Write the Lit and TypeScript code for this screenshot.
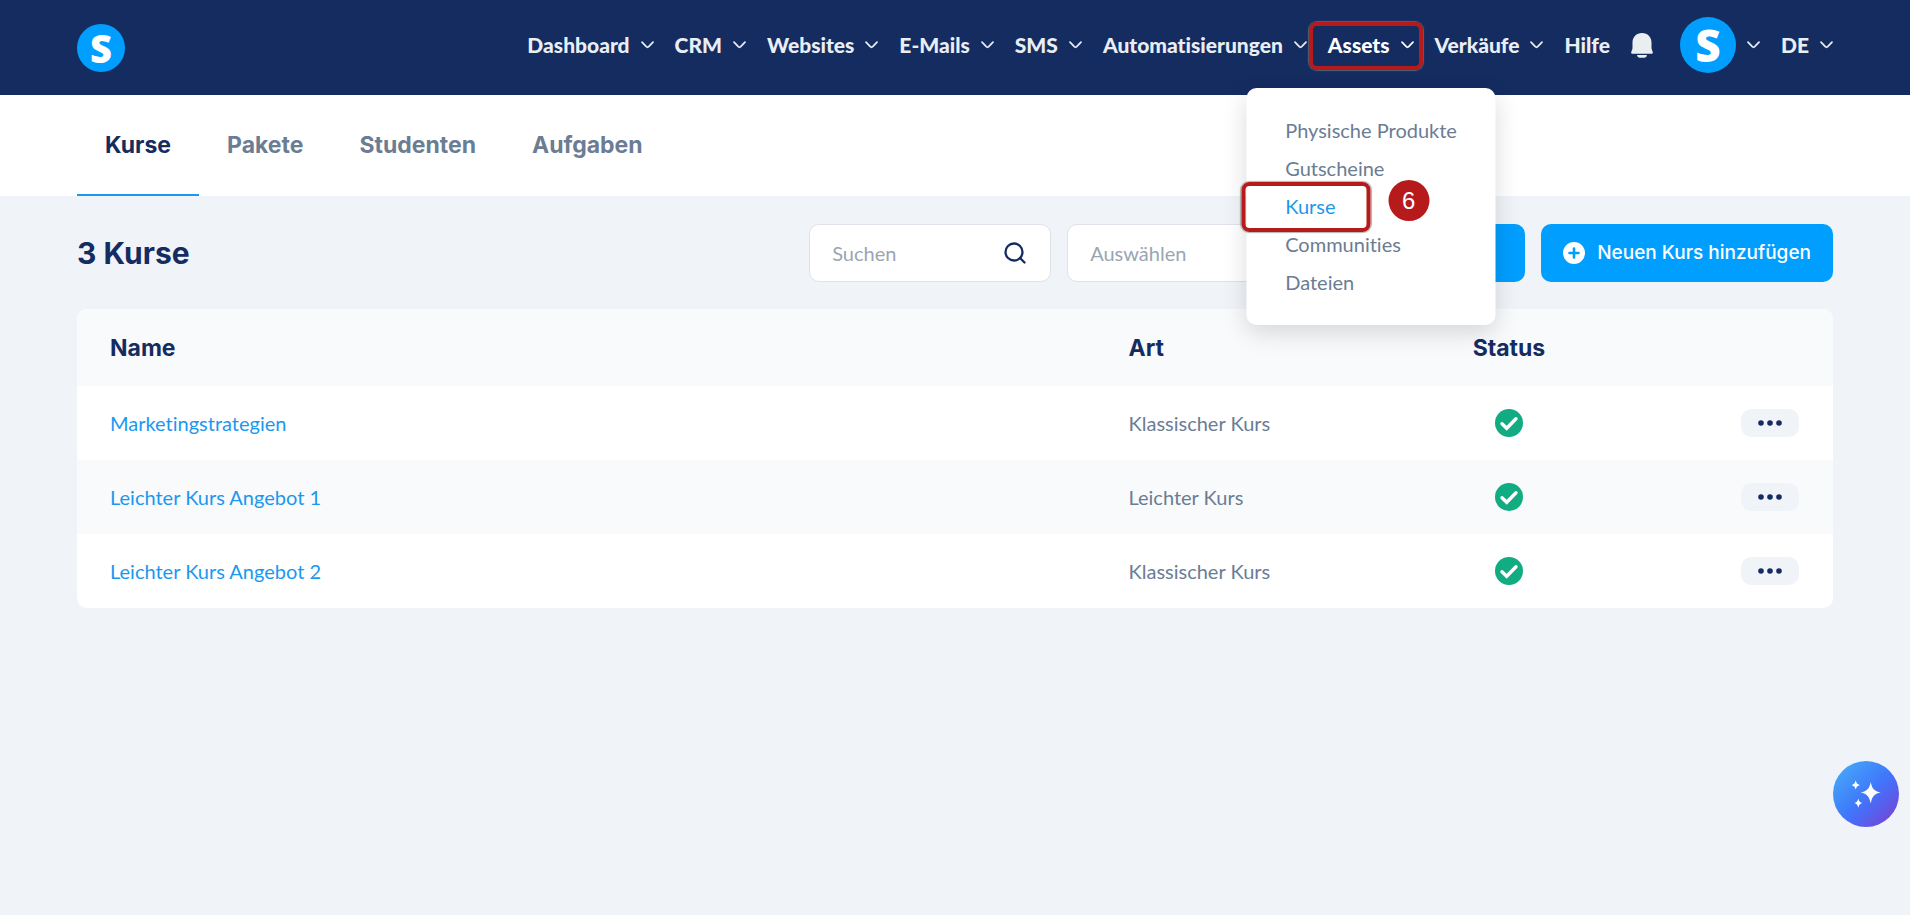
import { LitElement, html, css, svg } from "lit";
import { customElement, property, state } from "lit/decorators.js";
import { classMap } from "lit/directives/class-map.js";

interface Course {
  name: string;
  kind: string;
}

const chevron = svg`<svg class="chevron" viewBox="0 0 13 8" width="13" height="8" aria-hidden="true">
  <path d="M1 1.2 L5.3 5.7 Q6.5 6.8 7.7 5.7 L12 1.2" fill="none" stroke="currentColor" stroke-width="1.7" stroke-linecap="round"/>
</svg>`;

@customElement("brand-mark")
export class BrandMark extends LitElement {
  static styles = css`
    :host {
      display: inline-flex;
      align-items: center;
      justify-content: center;
      width: 48px;
      height: 48px;
      border-radius: 50%;
      background: #009eff;
      color: #fff;
      font: 800 38px/46px "Open Sans", sans-serif;
    }
    :host([large]) {
      width: 56px;
      height: 56px;
      font-size: 44px;
      line-height: 54px;
    }
  `;
  @property({ type: Boolean, reflect: true }) large = false;
  render() {
    return html`<span>S</span>`;
  }
}

@customElement("main-nav")
export class MainNav extends LitElement {
  static styles = css`
    :host {
      display: block;
      font: 900 21px/24px Lato, sans-serif;
      font-variant-ligatures: none;
    }
    .list {
      display: flex;
      align-items: center;
      gap: 21px;
      margin: 0;
      padding: 0;
      list-style: none;
    }
    .item {
      position: relative;
    }
    .link {
      display: flex;
      align-items: center;
      gap: 11px;
      padding: 0;
      border: 0;
      background: none;
      color: #e9eef5;
      font: inherit;
      text-decoration: none;
      white-space: nowrap;
      cursor: pointer;
    }
    .link.open {
      color: #fff;
    }
    .chevron {
      flex: none;
    }
    .bell {
      display: block;
    }
    .tools {
      margin-left: 6px;
    }
    .frame {
      position: absolute;
      box-sizing: border-box;
      border: 4px solid #b71a1b;
      border-radius: 8px;
      box-shadow: 0 0 1px 1px rgba(130, 130, 120, 0.6);
      pointer-events: none;
    }
    .frame.top {
      inset: -11px -9px -13px -19px;
    }
    .frame.entry {
      inset: -5px 125px -7px -5px;
    }
    .menu {
      position: absolute;
      top: 55px;
      left: 50%;
      width: 249px;
      box-sizing: border-box;
      transform: translateX(-50%);
      margin: 0;
      padding: 23px 0 24px;
      list-style: none;
      border-radius: 10px;
      background: #fff;
      box-shadow: 0 8px 24px rgba(0, 0, 0, 0.14);
      font-weight: 400;
      font-size: 20px;
      line-height: 38px;
    }
    .entry-row {
      position: relative;
      padding-left: 39px;
    }
    .entry-link {
      color: #6b7c93;
      text-decoration: none;
    }
    .entry-link.current {
      color: #1b98ee;
    }
    .step {
      position: absolute;
      top: -7px;
      left: 142px;
      width: 41px;
      height: 41px;
      border-radius: 50%;
      background: #b71a1b;
      color: #fff;
      font: 400 24px/41px "Liberation Sans", sans-serif;
      text-align: center;
    }
  `;

  @state() private open = "Assets";

  private sections = ["Dashboard", "CRM", "Websites", "E-Mails", "SMS", "Automatisierungen", "Assets", "Verkäufe"];
  private assets = ["Physische Produkte", "Gutscheine", "Kurse", "Communities", "Dateien"];

  private toggle(name: string) {
    this.open = this.open === name ? "" : name;
  }

  private menu() {
    return html`<ul class="menu">
      ${this.assets.map(
        (a) => html`<li class="entry-row">
          <a href="#" class=${classMap({ "entry-link": true, current: a === "Kurse" })}>${a}</a>
          ${a === "Kurse" ? html`<span class="frame entry"></span><span class="step">6</span>` : ""}
        </li>`
      )}
    </ul>`;
  }

  render() {
    return html`<nav>
      <ul class="list">
        ${this.sections.map(
          (s) => html`<li class="item">
            <button
              type="button"
              class=${classMap({ link: true, open: s === this.open })}
              aria-expanded=${s === this.open ? "true" : "false"}
              @click=${() => this.toggle(s)}
            >${s}${chevron}</button>
            ${s === "Assets" && this.open === s ? html`<span class="frame top"></span>${this.menu()}` : ""}
          </li>`
        )}
        <li><a class="link" href="#">Hilfe</a></li>
        <li>
          <button type="button" class="link" aria-label="Benachrichtigungen">
            <svg class="bell" viewBox="0 0 22 25" width="22" height="25" aria-hidden="true">
              <path fill="#e9eef0" d="M11 0C5.300 0 1.500 4.200 1.500 9.500V15.500L.2 19.200Q-.2 20.700 1.400 20.700H20.600Q22.200 20.700 21.800 19.200L20.500 15.500V9.500C20.500 4.200 16.700 0 11 0Z"/>
              <path fill="#e9eef0" d="M6 22H16Q15.600 24.700 13.500 24.700H8.500Q6.400 24.700 6 22Z"/>
            </svg>
          </button>
        </li>
        <li class="tools">
          <button type="button" class="link" aria-label="Konto"><brand-mark large></brand-mark>${chevron}</button>
        </li>
        <li><button type="button" class="link">DE${chevron}</button></li>
      </ul>
    </nav>`;
  }
}

@customElement("course-table")
export class CourseTable extends LitElement {
  static styles = css`
    :host {
      display: block;
      overflow: hidden;
      border-radius: 10px;
      background: #fff;
      font: 400 20px/24px Lato, sans-serif;
      font-variant-ligatures: none;
      color: #6b7c93;
    }
    .table {
      width: 100%;
      border-collapse: collapse;
      table-layout: fixed;
    }
    .head,
    .cell {
      box-sizing: border-box;
    }
    .name {
      width: 58%;
    }
    .kind {
      width: 19.6%;
    }
    .status {
      width: 12%;
    }
    .head {
      height: 77px;
      padding: 0 34px 0 33px;
      background: #f9fafc;
      color: #152c61;
      font: 700 23px/32px Inter, sans-serif;
      text-align: left;
    }
    .cell {
      height: 74px;
      padding: 0 34px 0 33px;
    }
    .cell.mark {
      padding-left: 55px;
    }
    .cell.actions {
      text-align: right;
    }
    .row:nth-child(even) .cell {
      background: #f9fafc;
    }
    .link {
      color: #1b98ee;
      text-decoration: none;
    }
    .check,
    .dots {
      display: block;
    }
    .more {
      display: inline-flex;
      align-items: center;
      justify-content: center;
      width: 58px;
      height: 28px;
      padding: 0;
      border: 0;
      border-radius: 10px;
      background: #f0f4f9;
      vertical-align: middle;
      cursor: pointer;
    }
  `;

  @property({ attribute: false }) courses: Course[] = [];

  render() {
    return html`<table class="table">
      <thead>
        <tr>
          <th class="head name" scope="col">Name</th>
          <th class="head kind" scope="col">Art</th>
          <th class="head status" scope="col">Status</th>
          <th class="head"></th>
        </tr>
      </thead>
      <tbody>
        ${this.courses.map(
          (c) => html`<tr class="row">
            <td class="cell"><a class="link" href="#">${c.name}</a></td>
            <td class="cell">${c.kind}</td>
            <td class="cell mark">
              <svg class="check" viewBox="0 0 28 28" width="28" height="28" role="img" aria-label="Aktiv">
                <circle cx="14" cy="14" r="14" fill="#12ac83"/>
                <path d="M7 14.800 L11.700 19.300 L21 9.800" fill="none" stroke="#fff" stroke-width="3.400" stroke-linecap="round" stroke-linejoin="miter"/>
              </svg>
            </td>
            <td class="cell actions">
              <button type="button" class="more" aria-label="Mehr">
                <svg class="dots" viewBox="0 0 24 6" width="24" height="6" aria-hidden="true" fill="#152c61">
                  <circle cx="3" cy="3" r="2.800"/><circle cx="12" cy="3" r="2.800"/><circle cx="21" cy="3" r="2.800"/>
                </svg>
              </button>
            </td>
          </tr>`
        )}
      </tbody>
    </table>`;
  }
}

@customElement("app-root")
export class AppRoot extends LitElement {
  static styles = css`
    :host {
      display: block;
      min-height: 100vh;
      background: #f0f4f9;
      color: #152c61;
      font: 400 20px/24px Lato, sans-serif;
      font-variant-ligatures: none;
    }
    .header {
      position: relative;
      z-index: 2;
      display: flex;
      align-items: center;
      justify-content: space-between;
      height: 95px;
      padding: 0 77px;
      background: #152c61;
    }
    .nav {
      margin-bottom: 5px;
    }
    .tabs {
      display: flex;
      padding: 0 77px;
      background: #fff;
    }
    .tab {
      padding: 34px 28px 33px;
      border-bottom: 2px solid transparent;
      color: #6b7c93;
      font: 700 23px/32px Inter, sans-serif;
      text-decoration: none;
    }
    .tab.active {
      border-color: #1b98ee;
      color: #152c61;
    }
    .main {
      display: flex;
      flex-direction: column;
      gap: 27px;
      padding: 28px 77px;
    }
    .toolbar {
      display: flex;
      align-items: center;
      gap: 16px;
    }
    .title {
      margin: 0 auto 0 0;
      font: 700 30px/40px Inter, sans-serif;
    }
    .field {
      box-sizing: border-box;
      display: flex;
      align-items: center;
      width: 242px;
      height: 58px;
      padding: 0 24px 0 22px;
      border: 1px solid #dfe2e8;
      border-radius: 10px;
      background: #fff;
    }
    .control {
      flex: 1;
      min-width: 0;
      padding: 0;
      border: 0;
      outline: 0;
      background: none;
      color: #9aa5b4;
      font: inherit;
      appearance: none;
    }
    .control::placeholder {
      color: #9aa5b4;
      opacity: 1;
    }
    .button {
      display: flex;
      align-items: center;
      gap: 12px;
      height: 58px;
      padding: 0 22px;
      border: 0;
      border-radius: 10px;
      background: #009eff;
      color: #fff;
      font: 500 19px/24px Inter, sans-serif;
      cursor: pointer;
    }
    .button.apply {
      width: 200px;
    }
    .assistant {
      position: fixed;
      right: 11px;
      bottom: 88px;
      width: 66px;
      height: 66px;
      padding: 0;
      border: 0;
      border-radius: 50%;
      background: linear-gradient(135deg, #45a6f8 10%, #3f79fb 50%, #4f66f2 65%, #7a42d2 95%);
      cursor: pointer;
    }
    .sparkles {
      display: block;
    }
  `;

  @state() private tab = "Kurse";

  private tabs = ["Kurse", "Pakete", "Studenten", "Aufgaben"];
  private courses: Course[] = [
    { name: "Marketingstrategien", kind: "Klassischer Kurs" },
    { name: "Leichter Kurs Angebot 1", kind: "Leichter Kurs" },
    { name: "Leichter Kurs Angebot 2", kind: "Klassischer Kurs" },
  ];

  render() {
    return html`
      <header class="header">
        <brand-mark></brand-mark>
        <main-nav class="nav"></main-nav>
      </header>
      <nav class="tabs">
        ${this.tabs.map(
          (t) => html`<a href="#" class=${classMap({ tab: true, active: t === this.tab })} @click=${() => (this.tab = t)}>${t}</a>`
        )}
      </nav>
      <main class="main">
        <div class="toolbar">
          <h1 class="title">${this.courses.length} Kurse</h1>
          <label class="field">
            <input class="control" type="text" placeholder="Suchen" aria-label="Suchen" />
            <svg viewBox="0 0 22 22" width="22" height="22" aria-hidden="true" fill="none" stroke="#152c61" stroke-width="2.300" stroke-linecap="round">
              <circle cx="10" cy="10" r="8.500"/><path d="M16 16 L20.500 20.500"/>
            </svg>
          </label>
          <label class="field">
            <select class="control" aria-label="Auswählen"><option>Auswählen</option></select>
          </label>
          <button type="button" class="button apply" aria-label="Filtern"></button>
          <button type="button" class="button">
            <svg viewBox="0 0 22 22" width="22" height="22" aria-hidden="true">
              <circle cx="11" cy="11" r="11" fill="#fff"/>
              <path d="M11 6.500V15.500M6.500 11H15.500" stroke="#009eff" stroke-width="2.600" stroke-linecap="round"/>
            </svg>
            Neuen Kurs hinzufügen
          </button>
        </div>
        <course-table .courses=${this.courses}></course-table>
      </main>
      <button type="button" class="assistant" aria-label="Assistent">
        <svg class="sparkles" viewBox="0 0 66 66" width="66" height="66" fill="#fff" aria-hidden="true">
          <path d="M37.700 21C39.200 28 41 30 47.700 31.500C41 33 39.200 35.500 37.700 42.500C36.200 35.500 34.200 33 27.700 31.500C34.200 30 36.200 28 37.700 21Z"/>
          <path d="M22.700 19.300C23.500 22.500 24.300 23.300 27 24C24.300 24.800 23.500 25.600 22.700 28.600C21.900 25.600 21.100 24.800 18.500 24C21.100 23.300 21.900 22.500 22.700 19.300Z"/>
          <path d="M25.300 37.500C26.100 40.600 26.900 41.300 29.500 42C26.900 42.700 26.100 43.600 25.300 46.700C24.500 43.600 23.700 42.700 21.100 42C23.700 41.300 24.500 40.600 25.300 37.500Z"/>
        </svg>
      </button>
    `;
  }
}
